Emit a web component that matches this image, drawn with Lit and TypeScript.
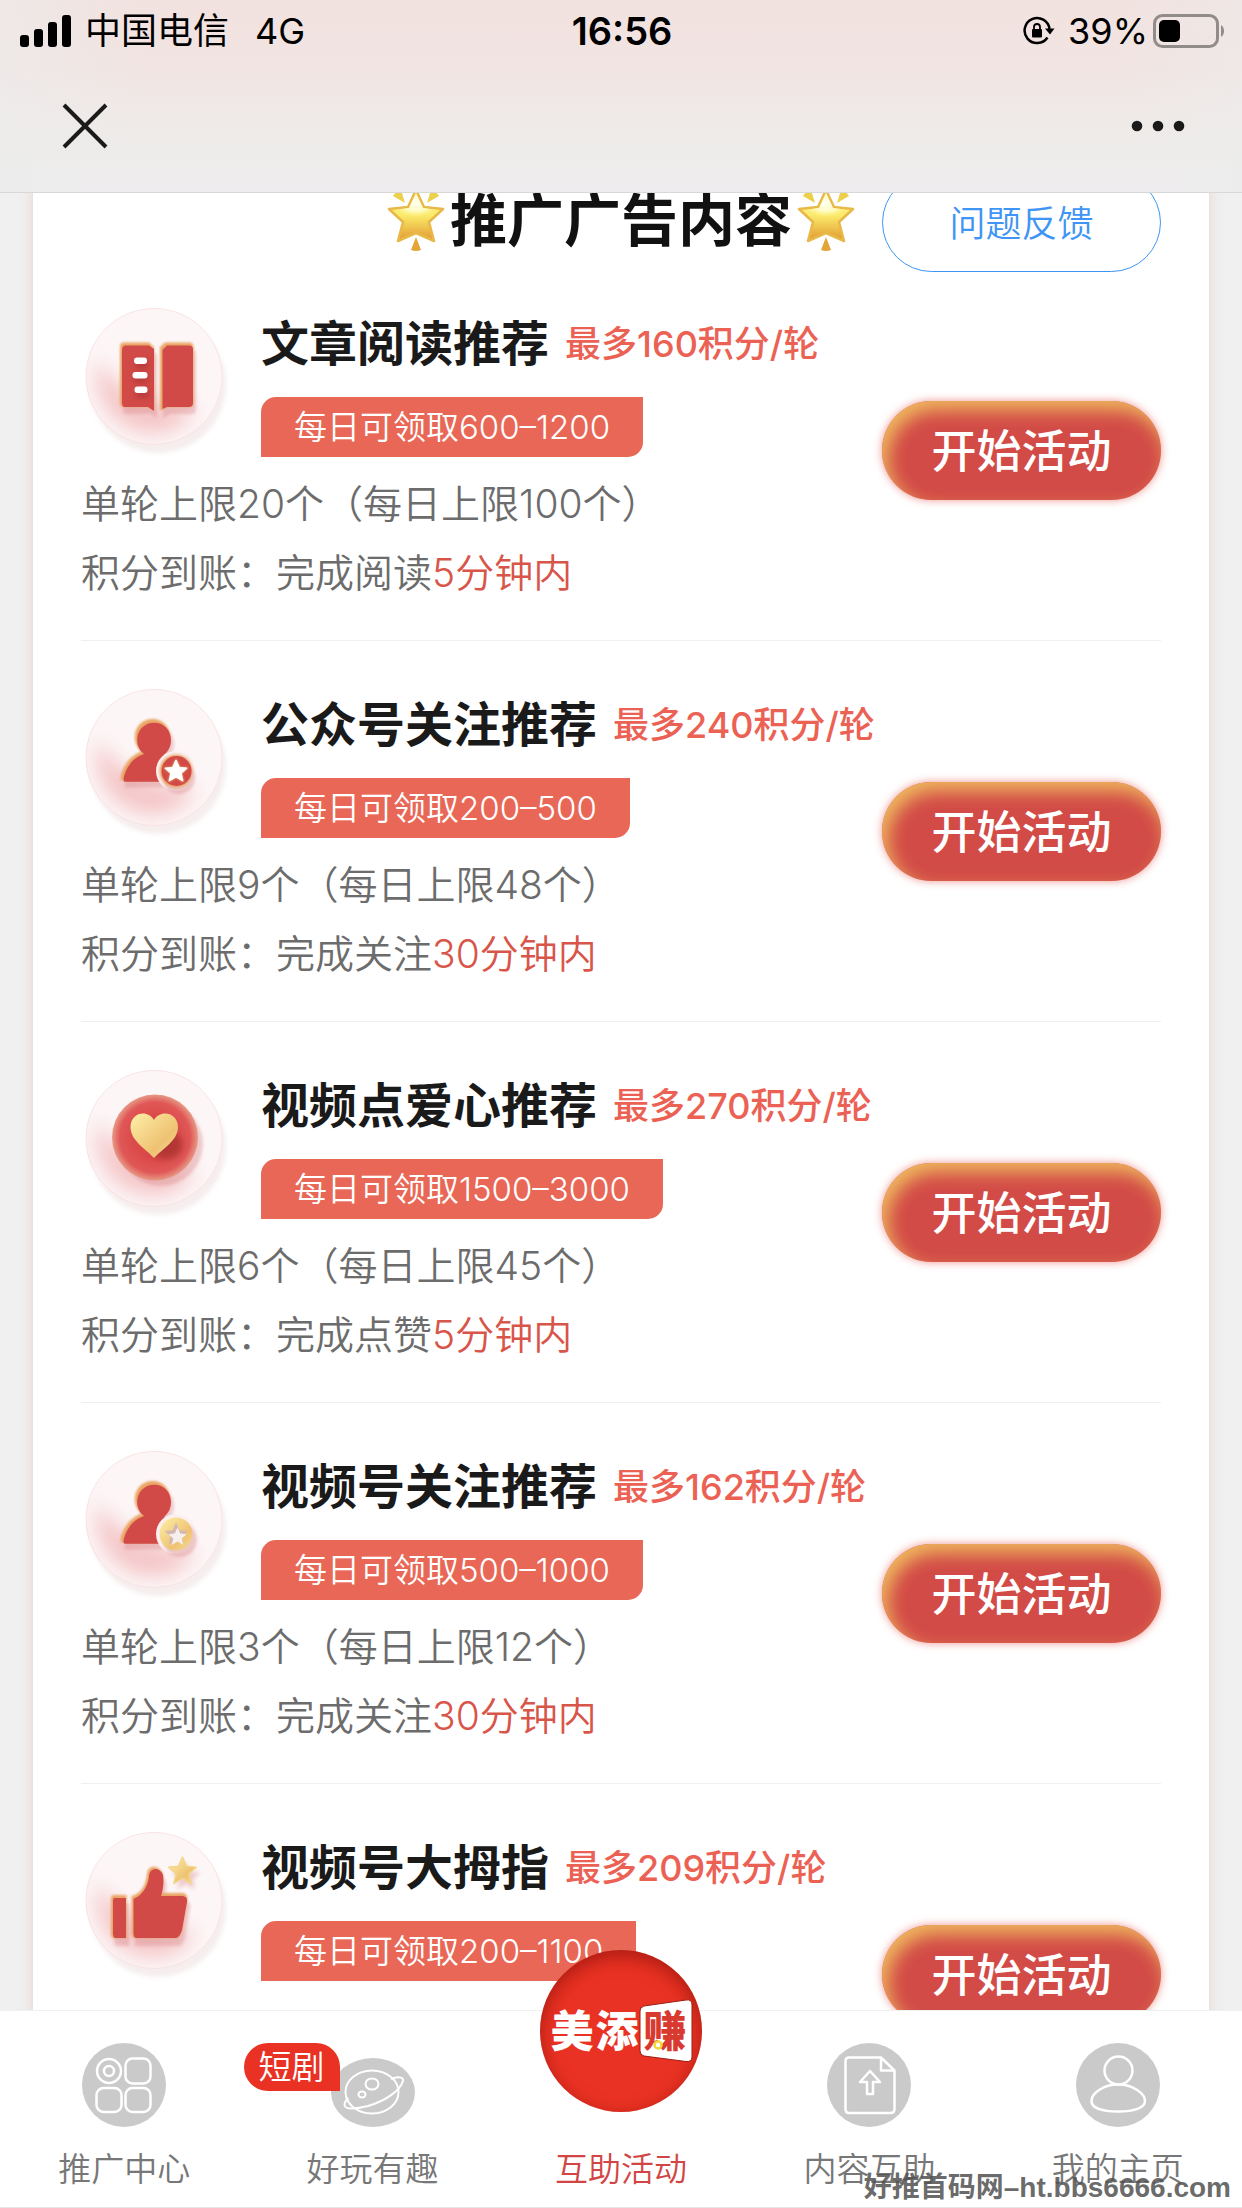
import { LitElement, html, css, svg, nothing } from "lit";
import { customElement, property } from "lit/decorators.js";

type IconName = "book" | "follow" | "heart" | "channel" | "thumb";

interface Activity {
  icon: IconName;
  title: string;
  max: string;
  daily: string;
  limit?: string;
  action?: string;
  time?: string;
}

const ACTIVITIES: Activity[] = [
  { icon: "book", title: "文章阅读推荐", max: "最多160积分/轮", daily: "每日可领取600–1200", limit: "单轮上限20个（每日上限100个）", action: "完成阅读", time: "5分钟内" },
  { icon: "follow", title: "公众号关注推荐", max: "最多240积分/轮", daily: "每日可领取200–500", limit: "单轮上限9个（每日上限48个）", action: "完成关注", time: "30分钟内" },
  { icon: "heart", title: "视频点爱心推荐", max: "最多270积分/轮", daily: "每日可领取1500–3000", limit: "单轮上限6个（每日上限45个）", action: "完成点赞", time: "5分钟内" },
  { icon: "channel", title: "视频号关注推荐", max: "最多162积分/轮", daily: "每日可领取500–1000", limit: "单轮上限3个（每日上限12个）", action: "完成关注", time: "30分钟内" },
  { icon: "thumb", title: "视频号大拇指", max: "最多209积分/轮", daily: "每日可领取200–1100" },
];

const STAR = "M0 -10 L2.9 -3.6 L9.6 -3 L4.5 1.6 L6 8.3 L0 4.8 L-6 8.3 L-4.5 1.6 L-9.6 -3 L-2.9 -3.6 Z";
const PERSON =
  "M71.5 34 C82 34 89 42 89 52 C89 59 86 64 82 67 C83 69 85 70 86 72 C79 76 76 82 77 88 C77.500 91 78 93 79 95.500 L41 95.500 C39 95.500 39.500 92 40 90 C43 79 50 70 61 66.500 C56 63 53.800 58 53.800 52 C53.800 42 61 34 71.5 34 Z";

const shapes = {
  book: svg`
    <path class="drop" transform="translate(3 7)" d="M43 39 H68 L73 44 V107 L67 103 H43 Q39 103 39 99 V43 Q39 39 43 39 Z M84 39 H108 Q112 39 112 43 V99 Q112 103 108 103 H86 L79 107 V44 Z" />
    <path class="gold" d="M43 38.500 H68 L73 43 V107 L67 103 H43 Q39 103 39 99 V42.500 Q39 38.500 43 38.500 Z M84 38.500 H108 Q112.500 38.500 112.500 43 V99 Q112.500 103 108 103 H86 L79 107 V43 Z" />
    <path class="red" d="M45 41.500 H68 L73 45 V107 L67 103 H43 Q41 102 41 99 V46 Q41 41.500 45 41.500 Z M86 41.500 H108 Q112 41.500 112 45 V99 Q112 103 108 103 H86 L81.500 105 V46 Z" />
    <g class="shade"><rect x="54" y="57" width="14" height="7" rx="3" /><rect x="53" y="71" width="14" height="7" rx="3" /><rect x="55" y="86" width="13" height="7" rx="3" /></g>
    <g fill="#fff"><rect x="53" y="53.500" width="13" height="6.500" rx="3" /><rect x="51.500" y="68" width="15" height="6.500" rx="3" /><rect x="53.500" y="82.500" width="13" height="6.500" rx="3" /></g>`,
  follow: svg`
    <path class="drop" transform="translate(4 7)" d="${PERSON}" />
    <path class="gold" d="${PERSON}" />
    <path class="red" transform="translate(2 2.500) translate(64 65) scale(.96 .96) translate(-64 -65)" d="${PERSON}" />
    <circle cx="95" cy="86" r="20" fill="#fbeff0" />
    <circle class="drop" cx="98" cy="93" r="16" />
    <circle class="gold" cx="95" cy="86" r="16.500" />
    <circle class="red" cx="95.500" cy="86" r="15" />
    <path class="gold" transform="translate(95 86.500) scale(1.350)" d="${STAR}" />
    <path transform="translate(95 86.500) scale(1.100)" d="${STAR}" fill="#fff" stroke="#fff" stroke-width="1.500" stroke-linejoin="round" />`,
  heart: svg`
    <circle class="drop" cx="80" cy="78" r="42" />
    <circle cx="74" cy="71.500" r="43" fill="url(#disc)" />
    <ellipse class="shade" cx="85" cy="79" rx="17" ry="14" />
    <path d="M73 92 C66 84 49.500 75 49.500 61 C49.500 46 67 43 73 54 C79 43 97 46 97 61 C97 75 80 84 73 92 Z" fill="url(#gold)" />`,
  channel: svg`
    <path class="drop" transform="translate(4 7)" d="${PERSON}" />
    <path class="gold" d="${PERSON}" />
    <path class="red" transform="translate(2 2.500) translate(64 65) scale(.96 .96) translate(-64 -65)" d="${PERSON}" />
    <circle cx="95" cy="87" r="20" fill="#fbeff0" />
    <circle class="drop" cx="99" cy="93" r="17" />
    <circle cx="95" cy="87" r="16.500" fill="url(#gold)" />
    <path transform="translate(95 87.500) scale(1.200)" d="${STAR}" fill="#d3b7b3" />
    <path transform="translate(96.500 90) scale(.950)" d="${STAR}" fill="#f7eeee" />`,
  thumb: svg`
    <path class="drop" transform="translate(3 8)" d="M30 68 H45 V110 H32 L30 107 Z M51 68 C60 66 65 57 66 46 C67 37 78 37 82 46 C83 54 82 60 80 65 H102 C106 66 107 69 106 73 L101 102 Q99 109 95 110 H51 Z" />
    <path class="gold" d="M32 67 H45.500 V110 H32 Q30 109 30 106 V69 Z M50.500 68 C60 66 65 57 66 46 C67 36 78 37 82 46 C83 54 82 60 80 65 H102 C106 66 107 69 106 73 L101 102 Q99 109 95 110 H53 Q50.500 109 50.500 106 Z" />
    <path class="red" d="M33 70 H45 V110 H34 Q32 109 32 106 V72 Z M52.500 71 C62 67 67 58 68 48 C69 39 79 39 82 47 C83 55 82 62 80 68 H100 C105 68 106.500 70 106 74 L101 102 Q99 109 95 110 H55 Q52.500 109 52.500 106 Z" />
    <path class="drop" transform="translate(105 49) scale(1.500)" d="${STAR}" />
    <path transform="translate(101.500 43.500) scale(1.450)" d="${STAR}" fill="url(#gold)" stroke="#f3d68b" stroke-width="1" stroke-linejoin="round" />`,
};

@customElement("activity-icon")
export class ActivityIcon extends LitElement {
  @property() name: IconName = "book";

  static styles = css`
    :host { display: block; flex: none; width: 150px; height: 150px; }
    .art { display: block; width: 100%; height: 100%; overflow: visible; }
    .base { fill: #f6eeee; filter: blur(2px); }
    .plate { fill: #fdf6f7; stroke: #fae4e6; stroke-width: 1; }
    .glow { fill: #f3bfc1; filter: blur(10px); opacity: .9; }
    .drop { fill: #d98a8c; opacity: .4; filter: blur(1.500px); }
    .shade { fill: #8f2420; opacity: .5; filter: blur(3px); }
    .gold { fill: #e9a564; filter: blur(.8px); }
    .red { fill: #d24a47; filter: blur(.5px); }
  `;

  render() {
    return html`
      <svg class="art" viewBox="0 0 150 150" aria-hidden="true">
        <defs>
          <linearGradient id="gold" x1="0" y1="0" x2="1" y2="1">
            <stop offset="0" stop-color="#fdf0a8" /><stop offset=".65" stop-color="#efc273" /><stop offset="1" stop-color="#f5dc9b" />
          </linearGradient>
          <radialGradient id="disc">
            <stop offset=".5" stop-color="#db4a4a" /><stop offset=".82" stop-color="#e05757" /><stop offset="1" stop-color="#e79a86" />
          </radialGradient>
          <clipPath id="round"><circle cx="73" cy="72.500" r="68" /></clipPath>
        </defs>
        <circle class="base" cx="77" cy="81" r="68" />
        <circle class="plate" cx="73" cy="72.500" r="68" />
        <g clip-path="url(#round)">
          <path class="glow" d="M16 56 C30 74 46 92 74 98 C90 102 102 104 114 102 C106 122 88 131 66 129 C34 125 10 96 16 56 Z" />
        </g>
        ${shapes[this.name]}
      </svg>
    `;
  }
}

@customElement("activity-row")
export class ActivityRow extends LitElement {
  @property({ attribute: false }) data!: Activity;

  static styles = css`
    :host { display: flex; align-items: center; box-sizing: border-box; min-height: 381px; border-bottom: 1px solid #efefef; }
    .body { flex: 1; min-width: 0; align-self: flex-start; padding: 44px 0 33px; }
    .head { display: flex; gap: 30px; height: 165px; }
    .info { display: flex; flex-direction: column; align-items: flex-start; gap: 13px; }
    .names { display: flex; align-items: center; gap: 16px; height: 80px; white-space: nowrap; }
    .title { margin: 0; font-size: 48px; line-height: 80px; font-weight: 700; color: #1a1a1a; }
    .max { font-size: 36px; line-height: 80px; font-weight: 500; color: #eb6255; }
    .daily { padding: 0 33px; border-radius: 15px 0 15px 0; background: #e96756; color: #fff; font-size: 33px; line-height: 60px; font-weight: 350; white-space: nowrap; }
    .line { margin: 0; font-size: 39px; line-height: 69px; font-weight: 350; color: #6c6c6c; white-space: nowrap; }
    .time { color: #d8554a; }
    .start { flex: none; width: 279px; height: 99px; padding: 0 0 4px; border: 0; border-radius: 50px; background: #d24b47; color: #fff; font: inherit; font-size: 45px; font-weight: 500; box-shadow: 0 0 9px rgba(226, 76, 70, .6), inset 6px 9px 18px #efb95f; }
  `;

  render() {
    const d = this.data;
    return html`
      <div class="body">
        <div class="head">
          <activity-icon name=${d.icon}></activity-icon>
          <div class="info">
            <div class="names"><h2 class="title">${d.title}</h2><span class="max">${d.max}</span></div>
            <span class="daily">${d.daily}</span>
          </div>
        </div>
        ${d.limit
          ? html`<p class="line">${d.limit}</p>
              <p class="line">积分到账：${d.action}<span class="time">${d.time}</span></p>`
          : nothing}
      </div>
      <button class="start" type="button">开始活动</button>
    `;
  }
}

const glowingStar = html`
  <svg class="glow-star" viewBox="0 0 58 68" aria-hidden="true">
    <defs>
      <linearGradient id="sun" x1="0" y1="0" x2="0" y2="1">
        <stop offset="0" stop-color="#fff3a0" /><stop offset=".5" stop-color="#fbea6a" /><stop offset="1" stop-color="#e0972f" />
      </linearGradient>
      <radialGradient id="shine" cx=".5" cy=".35" r=".5">
        <stop offset="0" stop-color="#fffff2" /><stop offset=".6" stop-color="#fffcc4" /><stop offset="1" stop-color="#fff59a" stop-opacity="0" />
      </radialGradient>
    </defs>
    <path d="M6 9 Q9 4 14 3 L18 16 Z M52 9 Q49 4 44 3 L40 16 Z" fill="#ecd04c" />
    <path d="M29 50 L34 63 Q29 65 24 63 Z" fill="#e3a53a" />
    <path d="M29 3 L37 20 L56 22 L42 35 L47 54 L29 46 L11 54 L16 35 L2 22 L21 20 Z" fill="url(#sun)" stroke="#e8b848" stroke-width="2.500" stroke-linejoin="round" />
    <path d="M29 6 L36 21 L52 23 L40 34 L18 34 L6 23 L22 21 Z" fill="url(#shine)" />
  </svg>
`;

@customElement("app-root")
export class AppRoot extends LitElement {
  static styles = css`
    :host { display: flex; flex-direction: column; height: 100vh; overflow: hidden; position: relative; background: #f0f0f0; color: #1a1a1a; font-family: Inter, "Noto Sans CJK SC", sans-serif; }
    .top { flex: none; border-bottom: 1px solid #d9d8d8; background: linear-gradient(90deg, rgba(236, 236, 236, .6), rgba(236, 236, 236, 0) 12%, rgba(236, 236, 236, 0) 90%, rgba(236, 236, 236, .5)), linear-gradient(#f2e2df, #f1e4e2 35%, #efe9e7 58%, #edecea 80%, #eeecee); }
    .status { display: grid; grid-template-columns: 1fr auto 1fr; align-items: center; height: 62px; padding: 0 18px 0 20px; font-size: 36px; color: #000; }
    .carrier { display: flex; align-items: center; gap: 14px; line-height: 60px; }
    .signal { display: block; width: 51px; height: 32px; }
    .net { margin-left: 12px; }
    .clock { font-size: 38px; font-weight: 600; }
    .power { display: flex; align-items: center; justify-content: flex-end; gap: 5px; }
    .lock { display: block; width: 32px; height: 30px; margin-right: 8px; }
    .battery { display: block; width: 71px; height: 34px; }
    .bar { display: flex; align-items: center; justify-content: space-between; height: 128px; padding: 0 57px 2px; }
    .tool { padding: 0; border: 0; background: none; color: #1a1a1a; }
    .tool svg { display: block; width: 56px; height: 56px; }
    .page { flex: 1; min-height: 0; overflow: hidden; padding: 0 33px; }
    .card { margin-top: -20px; padding: 0 48px; background: #fff; box-shadow: 0 0 12px rgba(220, 120, 120, .25); }
    .heading { display: grid; grid-template-columns: 1fr auto 1fr; align-items: center; margin-bottom: -12px; }
    .name { grid-column: 2; display: flex; align-items: center; margin: 0; padding-bottom: 4px; font-size: 57px; line-height: 95px; font-weight: 700; color: #111; white-space: nowrap; gap: 5px; }
    .glow-star { display: block; width: 58px; height: 68px; }
    .feedback { justify-self: end; width: 279px; height: 99px; padding: 0 0 4px; border: 1px solid #3f95f5; border-radius: 50px; background: #fff; color: #3f95f5; font: inherit; font-size: 36px; font-weight: 350; }
    .tabs { flex: none; position: relative; display: grid; grid-template-columns: repeat(5, 1fr); border-top: 1px solid #f0f0f0; border-bottom: 1px solid #e6e6e6; background: #fff; }
    .tab { display: flex; flex-direction: column; align-items: center; justify-content: flex-end; gap: 21px; padding: 32px 0 17px; color: #777; font-size: 33px; font-weight: 350; line-height: 42px; text-decoration: none; }
    .tab.active { gap: 36px; padding-top: 0; color: #d24545; }
    .mark { position: relative; display: flex; align-items: flex-end; width: 84px; height: 84px; }
    .mark svg { display: block; width: 100%; }
    .flag { position: absolute; top: 0; right: 75px; padding: 0 15px; border-radius: 24px 24px 0 24px; background: #e93223; color: #fff; line-height: 48px; white-space: nowrap; }
    .logo { display: block; width: 162px; height: 162px; margin-top: -61px; border-radius: 50%; background: #e93223; box-shadow: inset 0 6px 18px rgba(120, 10, 5, .55); }
    .logo text { font-family: "Noto Sans CJK SC", sans-serif; font-weight: 900; font-size: 43px; text-anchor: middle; }
    .site { position: absolute; right: 11px; bottom: 2px; color: rgba(80, 80, 80, .85); font-family: "Liberation Sans", "Noto Sans CJK SC", sans-serif; font-size: 28px; line-height: 36px; font-weight: 700; }
  `;

  private tab(label: string, art: unknown, flag?: string) {
    return html`
      <a class="tab" href="#">
        <span class="mark">${art}${flag ? html`<span class="flag">${flag}</span>` : nothing}</span>
        <span>${label}</span>
      </a>
    `;
  }

  render() {
    return html`
      <header class="top">
        <div class="status">
          <div class="carrier">
            <svg class="signal" viewBox="0 0 51 32" aria-hidden="true">
              <rect y="20" width="9" height="12" rx="3" /><rect x="14" y="14" width="9" height="18" rx="3" /><rect x="28" y="7" width="9" height="25" rx="3" /><rect x="42" width="9" height="32" rx="3" />
            </svg>
            <span>中国电信</span><span class="net">4G</span>
          </div>
          <span class="clock">16:56</span>
          <div class="power">
            <svg class="lock" viewBox="0 0 32 30" aria-hidden="true">
              <path d="M24.500 21.500 A12.500 12.500 0 1 1 26.500 13" fill="none" stroke="#000" stroke-width="2.500" />
              <path d="M22 12.500 H31.500 L27 18.500 Z" />
              <rect x="9" y="13" width="10" height="8.500" rx="1" />
              <path d="M11 14 V11 A3 3 0 0 1 17 11 V14" fill="none" stroke="#000" stroke-width="1.800" />
            </svg>
            <span>39%</span>
            <svg class="battery" viewBox="0 0 71 34" aria-hidden="true">
              <rect x="1.500" y="1.500" width="63" height="31" rx="8" fill="none" stroke="#918b8a" stroke-width="3" />
              <rect x="6" y="6" width="21" height="22" rx="5" />
              <path d="M68 11 Q71 13 71 17 Q71 21 68 23 Z" fill="#918b8a" />
            </svg>
          </div>
        </div>
        <div class="bar">
          <button class="tool" type="button" aria-label="关闭">
            <svg viewBox="0 0 56 56"><path d="M7 7 L49 49 M49 7 L7 49" stroke="currentColor" stroke-width="4" /></svg>
          </button>
          <button class="tool" type="button" aria-label="更多">
            <svg viewBox="0 0 56 56" fill="currentColor"><circle cx="8" cy="28" r="5.300" /><circle cx="29" cy="28" r="5.300" /><circle cx="50" cy="28" r="5.300" /></svg>
          </button>
        </div>
      </header>

      <main class="page">
        <section class="card">
          <div class="heading">
            <h1 class="name">${glowingStar}<span>推广广告内容</span>${glowingStar}</h1>
            <button class="feedback" type="button">问题反馈</button>
          </div>
          ${ACTIVITIES.map((a) => html`<activity-row .data=${a}></activity-row>`)}
        </section>
      </main>

      <nav class="tabs">
        ${this.tab("推广中心", html`
          <svg viewBox="0 0 84 84" aria-hidden="true">
            <circle cx="42" cy="42" r="42" fill="#cacaca" />
            <g fill="none" stroke="#fff" stroke-width="2.500">
              <circle cx="27" cy="28" r="12" /><circle cx="27" cy="28" r="5" />
              <rect x="43.500" y="15.500" width="25" height="25" rx="7" /><rect x="14.500" y="45" width="25" height="24" rx="7" /><rect x="43.500" y="45" width="25" height="24" rx="7" />
            </g>
          </svg>`)}
        ${this.tab("好玩有趣", html`
          <svg viewBox="0 0 84 69" aria-hidden="true">
            <ellipse cx="42" cy="34.500" rx="42" ry="34.500" fill="#cacaca" />
            <g fill="none" stroke="#fff" stroke-width="2">
              <ellipse cx="41" cy="34" rx="26.500" ry="21.500" /><ellipse cx="41" cy="26" rx="6.500" ry="5.500" /><ellipse cx="31" cy="36.500" rx="3.500" ry="3" />
              <path d="M60 21 C67 18 73 19 72 23 C69 33 54 43 37 48 C25 51 14 52 13.500 47 C13.500 44 15 42 17.500 40" />
            </g>
          </svg>`, "短剧")}
        <a class="tab active" href="#" aria-current="page">
          <svg class="logo" viewBox="0 0 162 162" aria-hidden="true">
            <path d="M104 56 L146 50 Q152 49 152 55 V107 Q152 112 146 111.500 L104 106 Q100 105 100 101 V61 Q100 57 104 56 Z" fill="#fff" stroke="#9c1c14" stroke-width="1" />
            <text x="32" y="97" fill="#fff">美</text><text x="77" y="97" fill="#fff">添</text><text x="125" y="97" fill="#d93a30">赚</text>
            <circle cx="118" cy="95" r="3.500" fill="#fff" stroke="#f0d83a" stroke-width="2.500" />
          </svg>
          <span>互助活动</span>
        </a>
        ${this.tab("内容互助", html`
          <svg viewBox="0 0 84 84" aria-hidden="true">
            <circle cx="42" cy="42" r="42" fill="#cacaca" />
            <g fill="none" stroke="#fff" stroke-width="2.500" stroke-linejoin="round">
              <path d="M22 14.500 H54 L67.500 27.500 V66 Q67.500 70 63.500 70 H22 Q18.500 70 18.500 66 V18 Q18.500 14.500 22 14.500 Z M54 14.500 V27.500 H67.500" />
              <path d="M43 28 L53 39 H46 V51 H40 V39 H33 Z" />
            </g>
          </svg>`)}
        ${this.tab("我的主页", html`
          <svg viewBox="0 0 84 84" aria-hidden="true">
            <circle cx="42" cy="42" r="42" fill="#cacaca" />
            <g fill="none" stroke="#fff" stroke-width="2.500">
              <circle cx="42.500" cy="27.500" r="14" />
              <path d="M42 41.500 C56 41.500 69 50 69 58 C69 65 58 68.500 42 68.500 C26 68.500 15.500 65 15.500 58 C15.500 50 28 41.500 42 41.500 Z" />
            </g>
          </svg>`)}
      </nav>
      <div class="site">好推首码网–ht.bbs6666.com</div>
    `;
  }
}
